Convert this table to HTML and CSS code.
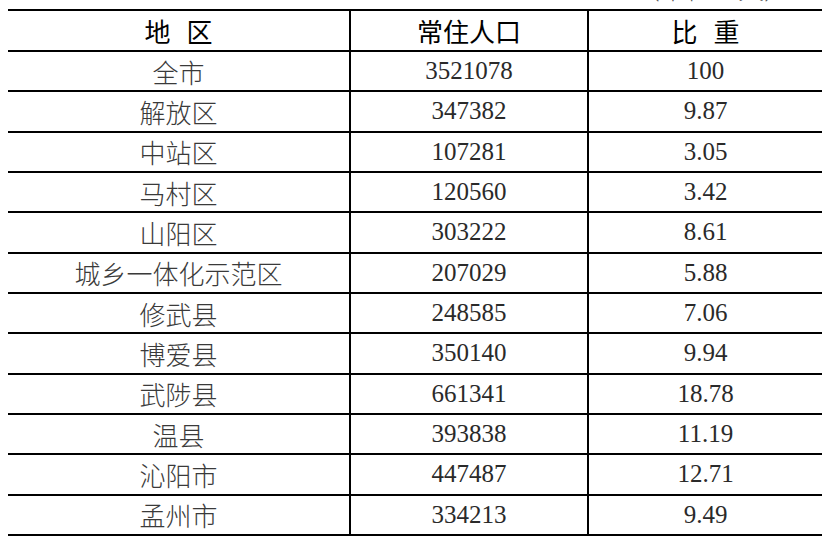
FILE: index.html
```html
<!DOCTYPE html>
<html lang="zh-CN">
<head>
<meta charset="utf-8">
<link rel="stylesheet" href="styles.css">
</head>
<body>
<div class="unit">（单位：人）</div>
<table class="pop">
  <colgroup>
    <col class="c1"><col class="c2"><col class="c3">
  </colgroup>
  <thead>
    <tr><th>地 区</th><th>常住人口</th><th>比 重</th></tr>
  </thead>
  <tbody>
    <tr><td class="name">全市</td><td class="num">3521078</td><td class="num">100</td></tr>
    <tr><td class="name">解放区</td><td class="num">347382</td><td class="num">9.87</td></tr>
    <tr><td class="name">中站区</td><td class="num">107281</td><td class="num">3.05</td></tr>
    <tr><td class="name">马村区</td><td class="num">120560</td><td class="num">3.42</td></tr>
    <tr><td class="name">山阳区</td><td class="num">303222</td><td class="num">8.61</td></tr>
    <tr><td class="name">城乡一体化示范区</td><td class="num">207029</td><td class="num">5.88</td></tr>
    <tr><td class="name">修武县</td><td class="num">248585</td><td class="num">7.06</td></tr>
    <tr><td class="name">博爱县</td><td class="num">350140</td><td class="num">9.94</td></tr>
    <tr><td class="name">武陟县</td><td class="num">661341</td><td class="num">18.78</td></tr>
    <tr><td class="name">温县</td><td class="num">393838</td><td class="num">11.19</td></tr>
    <tr><td class="name">沁阳市</td><td class="num">447487</td><td class="num">12.71</td></tr>
    <tr><td class="name">孟州市</td><td class="num">334213</td><td class="num">9.49</td></tr>
  </tbody>
</table>
</body>
</html>
```
FILE: styles.css
```css
html, body {
  background: #fff;
}
body {
  margin: 0;
  padding: 0 8px;
  overflow: hidden;
  height: 547px;
}
.unit {
  margin-top: -20px;
  line-height: 16px;
  height: 29px;
  text-align: right;
  padding-right: 36px;
  font-family: "Noto Sans CJK SC", sans-serif;
  font-weight: 300;
  font-size: 26px;
  color: #555;
}
.pop {
  width: 814px;
  border-collapse: collapse;
  table-layout: fixed;
}
.c1 { width: 342px; }
.c2 { width: 238px; }
.c3 { width: 234px; }
.pop th, .pop td {
  border-top: 2px solid #000;
  border-bottom: 2px solid #000;
  padding: 0;
  text-align: center;
  vertical-align: middle;
}
.pop th + th, .pop td + td {
  border-left: 2px solid #000;
}
.pop thead tr {
  height: 41px;
}
.pop tbody tr {
  height: 40.33px;
}
.pop th {
  font-family: "Noto Sans CJK SC", sans-serif;
  font-weight: 400;
  font-size: 26px;
  color: #000;
  word-spacing: 10px;
}
.name {
  font-family: "Noto Sans CJK SC", sans-serif;
  font-weight: 300;
  font-size: 26px;
  color: #3a3a3a;
}
.num {
  font-family: "Liberation Serif", serif;
  font-size: 25px;
  color: #2a2a2a;
}
```
